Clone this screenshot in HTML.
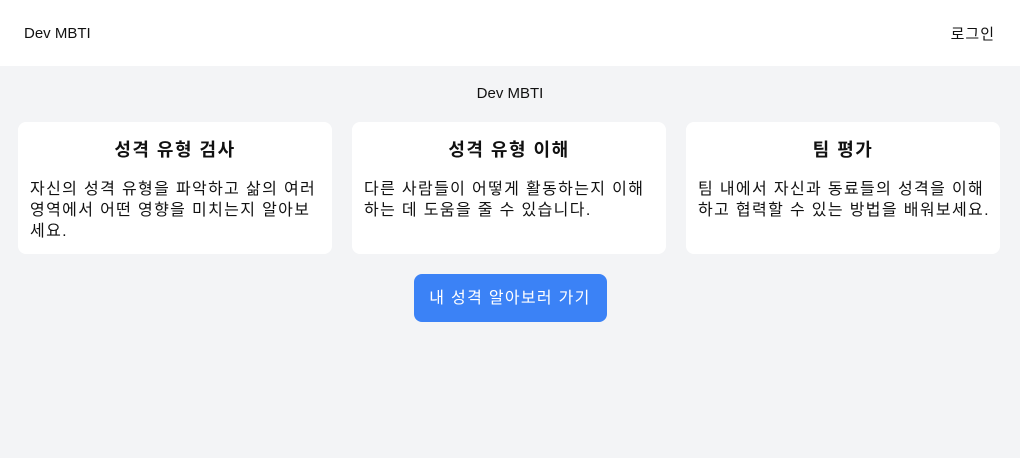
<!DOCTYPE html>
<html><head><meta charset="utf-8"><style>
*{margin:0;padding:0;box-sizing:border-box}
body{width:1020px;height:458px;background:#f3f4f6;font-family:"Liberation Sans","Noto Sans CJK KR",sans-serif;color:#111;font-size:16px;overflow:hidden}
header{height:66px;background:#fff;display:flex;justify-content:space-between;align-items:center;padding:0 25px 0 24px;font-size:15px}
header span:last-child{letter-spacing:1px}
.t{text-align:center;font-size:15px;margin-top:19px;height:22px}
.cards{display:flex;gap:20px;padding:0 19px 0 18px;margin-top:15px}
.card{width:314px;height:132px;background:#fff;border-radius:8px;padding:15px 12px}
.card h2{font-size:18px;font-weight:bold;text-align:center;line-height:26px;margin-bottom:16px;letter-spacing:1.5px}
.card p{line-height:21px;font-size:16px;white-space:nowrap;letter-spacing:1.35px}
.btn{display:block;margin:20px auto 0;width:193px;height:48px;background:#3b82f6;color:#fff;border-radius:8px;text-align:center;line-height:50px;font-size:16px;letter-spacing:1.3px}
</style></head><body>
<header><span>Dev MBTI</span><span>로그인</span></header>
<div class="t">Dev MBTI</div>
<div class="cards">
<div class="card"><h2>성격 유형 검사</h2><p>자신의 성격 유형을 파악하고 삶의 여러<br>영역에서 어떤 영향을 미치는지 알아보<br>세요.</p></div>
<div class="card"><h2>성격 유형 이해</h2><p>다른 사람들이 어떻게 활동하는지 이해<br>하는 데 도움을 줄 수 있습니다.</p></div>
<div class="card"><h2>팀 평가</h2><p>팀 내에서 자신과 동료들의 성격을 이해<br>하고 협력할 수 있는 방법을 배워보세요.</p></div>
</div>
<div class="btn">내 성격 알아보러 가기</div>
</body></html>
